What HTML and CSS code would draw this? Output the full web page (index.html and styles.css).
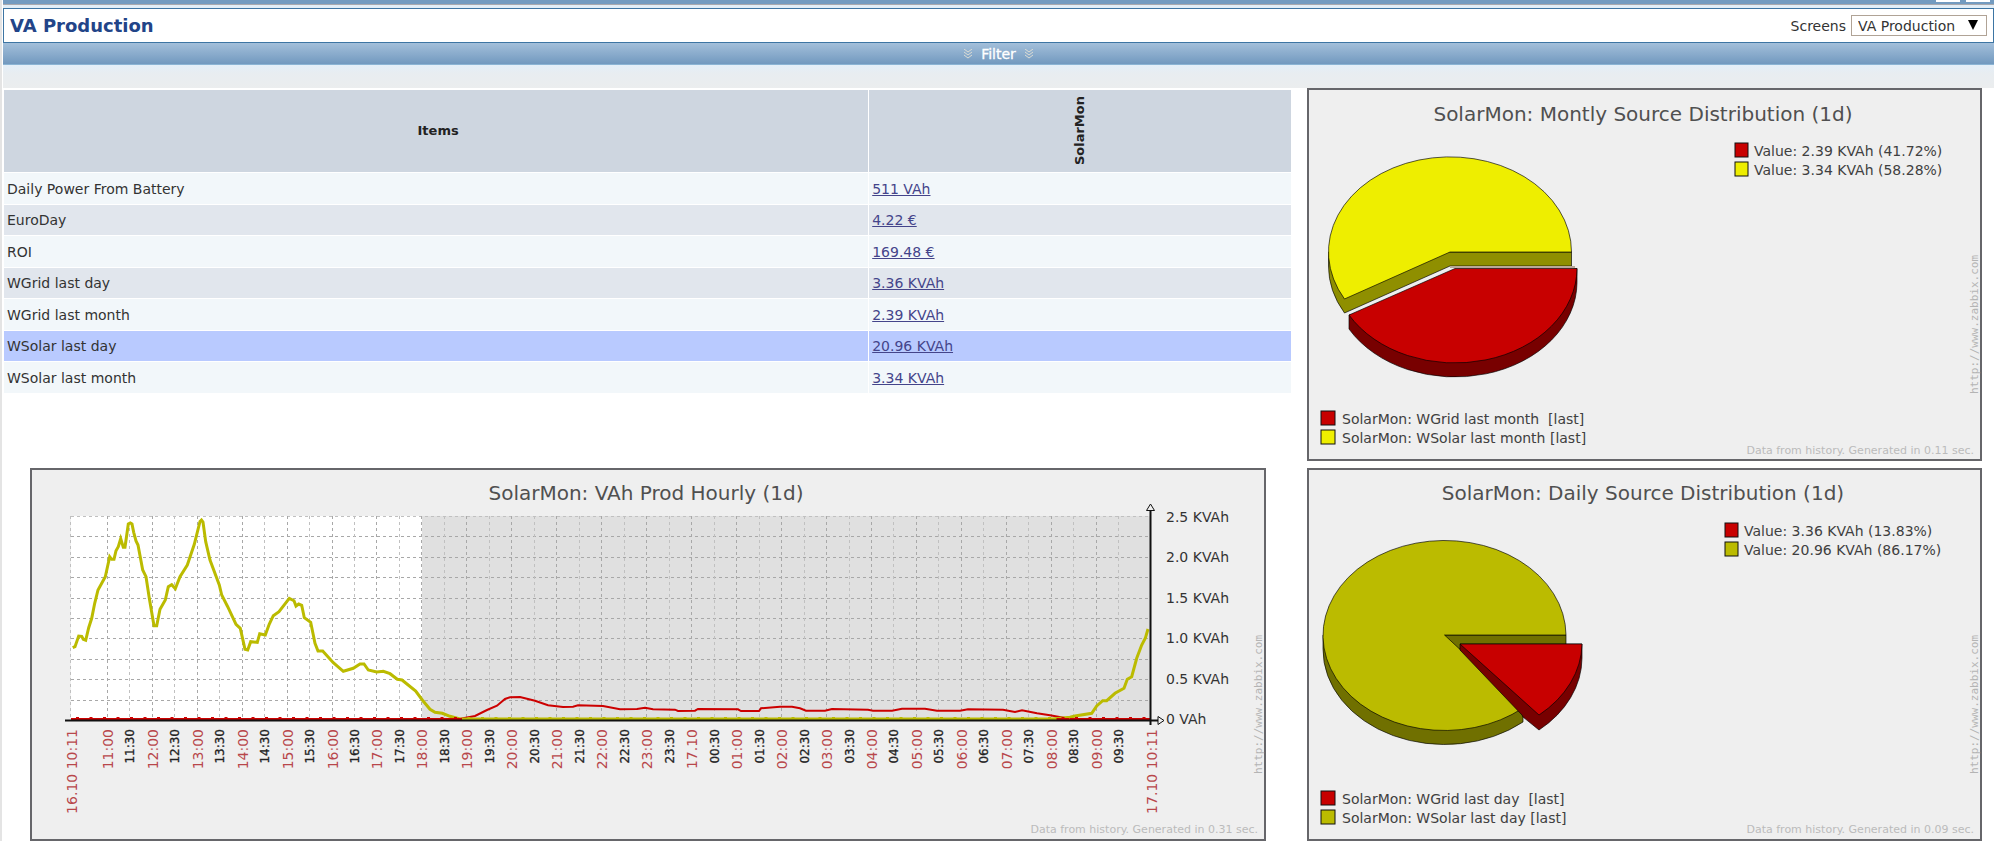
FILE: index.html
```html
<!DOCTYPE html>
<html lang="en">
<head>
<meta charset="utf-8">
<title>VA Production</title>
<link rel="stylesheet" href="styles.css">
</head>
<body>
<div class="page">
  <div class="topstrip"><span class="stub"></span><span class="stub"></span></div>
  <header class="titlebar">
    <h1>VA Production</h1>
    <div class="screens">
      <label for="screen">Screens</label>
      <span class="picker">
        <select id="screen"><option>VA Production</option></select>
        <svg class="arrow" width="10" height="10" viewBox="0 0 10 10" aria-hidden="true"><path d="M0 0H10L5 10Z"/></svg>
      </span>
    </div>
  </header>
  <button class="filter" type="button">
    <svg class="chev" width="8" height="10" viewBox="0 0 8 10" aria-hidden="true"><path d="M0 0L4 3L8 0M0 3L4 6L8 3M0 6L4 9L8 6"/></svg>
    Filter
    <svg class="chev" width="8" height="10" viewBox="0 0 8 10" aria-hidden="true"><path d="M0 0L4 3L8 0M0 3L4 6L8 3M0 6L4 9L8 6"/></svg>
  </button>
  <div class="spacer"></div>
  <main class="grid">
    <div class="items-cell">
      <table class="items">
        <thead><tr><th class="name">Items</th><th><span class="vertical">SolarMon</span></th></tr></thead>
        <tbody>
          <tr><td>Daily Power From Battery</td><td><a href="#">511 VAh</a></td></tr>
          <tr><td>EuroDay</td><td><a href="#">4.22 €</a></td></tr>
          <tr><td>ROI</td><td><a href="#">169.48 €</a></td></tr>
          <tr><td>WGrid last day</td><td><a href="#">3.36 KVAh</a></td></tr>
          <tr><td>WGrid last month</td><td><a href="#">2.39 KVAh</a></td></tr>
          <tr class="selected"><td>WSolar last day</td><td><a href="#">20.96 KVAh</a></td></tr>
          <tr><td>WSolar last month</td><td><a href="#">3.34 KVAh</a></td></tr>
        </tbody>
      </table>
    </div>

    <svg class="chart" viewBox="0 0 675 373" role="img" aria-label="Monthly source distribution">
      <rect class="frame" x="1" y="1" width="673" height="371"/>
      <text class="title" x="336" y="33">SolarMon: Montly Source Distribution (1d)</text>
      <rect class="swatch red" x="428" y="55" width="13" height="14"/>
      <text class="legend" x="447" y="68">Value: 2.39 KVAh (41.72%)</text>
      <rect class="swatch yellow" x="428" y="74" width="13" height="14"/>
      <text class="legend" x="447" y="87">Value: 3.34 KVAh (58.28%)</text>
      <path class="slice yellow-side" d="M21.5 164V178A121.5 95 0 0 0 37.5 225L143 178H264.5V164Z"/>
      <path class="slice yellow" d="M143 164H264.5A121.5 95 0 1 0 37.5 211Z"/>
      <path class="glow" d="M143 179H268"/>
      <path class="slice red-side" d="M42 227V241A122 95 0 0 0 270 194.5V180.5Z"/>
      <path class="slice red" d="M148 180.5H270A122 95 0 0 1 42 227Z"/>
      <rect class="swatch red" x="14" y="323" width="14" height="14"/>
      <text class="legend" x="35" y="336">SolarMon: WGrid last month  [last]</text>
      <rect class="swatch yellow" x="14" y="342" width="14" height="14"/>
      <text class="legend" x="35" y="355">SolarMon: WSolar last month [last]</text>
      <text class="note" x="667" y="366">Data from history. Generated in 0.11 sec.</text>
      <text class="url" transform="translate(671 306) rotate(-90)">http://www.zabbix.com</text>
    </svg>

    <div class="hourly-cell">
      <svg class="chart" id="hourly" viewBox="0 0 1236 373" role="img" aria-label="VAh Prod Hourly">
        <rect class="frame" x="1" y="1" width="1234" height="371"/>
        <text class="title" x="616" y="32">SolarMon: VAh Prod Hourly (1d)</text>
        <rect class="day" x="41" y="48" width="351" height="204"/>
        <rect class="night" x="392" y="48" width="728" height="204"/>
        <g id="gridlines"></g>
        <polyline class="line-red" points="41,251 430,251 433,250.3 445,248 457,242 467,237.7 475,231 480,229.3 490,229 505,232.7 518,237.3 533,239 543,238.7 548,237.3 573,238 590,241.3 607,241 615,239.7 623,241.3 645,241.7 648,243 665,242.7 668,241 708,241.3 711,243 729,243 731,240.3 750,238.7 762,238.7 770,240.3 776,242.7 795,242.7 802,241 838,241.7 843,242.7 862,242.7 872,240.7 895,240.7 907,242.7 930,242.7 938,241.3 973,241.7 985,244 992,242.3 1007,245.3 1020,247.3 1035,250 1040,251 1119,251"/>
        <polyline class="line-olive" points="42.7,179.7 45,178.7 48.7,168 51.7,168.3 53.3,171.3 55.7,172.3 58.7,159.7 61.7,150.3 64.7,135.3 68,122 75.3,108.7 79.7,88.7 81.7,91.3 84,91.3 86,82.7 88.3,78.7 90.7,70.7 93.3,79.3 95,79.3 98.3,56 100.3,55 102,56 103.7,64.3 106,73 108,77 112.7,102 116,108.7 119.3,130.3 124,157.7 126.7,157.7 130,141.3 135.3,132 138.3,118.7 141.7,116.7 145.3,120.7 150,108.7 157.3,97 164.3,76.3 170,53.5 171.5,52 173,54 175.7,73.7 180,92 189.3,117 191.7,127 197.7,138.7 206,156.3 210.3,160.3 215,181.3 217.7,182 220.7,173.7 227.3,174.3 229.7,165.7 235.3,167 239.3,156 243.3,147.7 249,143.7 259.3,130.3 264,132.7 266,138 268.7,136 271.7,137.3 274.3,149.7 280.7,154.3 285,175.3 288,183 292.7,183 303.3,194.7 313.3,203.3 323.3,200.3 330,196 334,196 338.3,202 346.7,204 353.3,203.3 360,205.7 367.3,211.3 372,212 385.7,223 392.3,232 400,241.3 405,244.3 412.3,245.3 420,248.3 430,251 1023,251 1040,249.3 1045,248 1061.7,245.3 1066.7,238 1072.7,232.7 1076.7,232.7 1085,225.3 1094,220.3 1097.3,211.3 1101.7,208.7 1106.7,190.3 1111.7,177 1115.3,170.3 1118,161"/>
        <g id="marks"></g>
        <path class="axis" d="M35 252.5H1128M1120.5 42V257"/>
        <path class="axis-tip" d="M1116.5 42.5L1120.5 36L1124.5 42.5ZM1128 248.5L1134 252.5L1128 256.5Z"/>
        <g id="labels"></g>
        <text class="note" x="1228" y="365">Data from history. Generated in 0.31 sec.</text>
        <text class="url" transform="translate(1232 306) rotate(-90)">http://www.zabbix.com</text>
      </svg>
    </div>

    <svg class="chart" viewBox="0 0 675 373" role="img" aria-label="Daily source distribution">
      <rect class="frame" x="1" y="1" width="673" height="371"/>
      <text class="title" x="336" y="32">SolarMon: Daily Source Distribution (1d)</text>
      <rect class="swatch red" x="418" y="55" width="13" height="14"/>
      <text class="legend" x="437" y="68">Value: 3.36 KVAh (13.83%)</text>
      <rect class="swatch olive" x="418" y="74" width="13" height="14"/>
      <text class="legend" x="437" y="87">Value: 20.96 KVAh (86.17%)</text>
      <path class="slice olive-side" d="M16 167V181A121.5 95 0 0 0 216 254V240L150 181H259V167Z"/>
      <path class="slice olive" d="M137.5 167H259A121.5 95 0 1 0 216 240Z"/>
      <path class="slice red-side" d="M153 176V182L215 247L216 249L232 262A122 95 0 0 0 275 190V176Z"/>
      <path class="slice red" d="M153 176H275A122 95 0 0 1 232 247Z"/>
      <rect class="swatch red" x="14" y="323" width="14" height="14"/>
      <text class="legend" x="35" y="336">SolarMon: WGrid last day  [last]</text>
      <rect class="swatch olive" x="14" y="342" width="14" height="14"/>
      <text class="legend" x="35" y="355">SolarMon: WSolar last day [last]</text>
      <text class="note" x="667" y="365">Data from history. Generated in 0.09 sec.</text>
      <text class="url" transform="translate(671 306) rotate(-90)">http://www.zabbix.com</text>
    </svg>
  </main>
</div>
<script src="chart.js"></script>
</body>
</html>
```
FILE: styles.css
```css
* { box-sizing: border-box; }
body {
  margin: 0;
  background: #fff;
  color: #333;
  font: 14px/18px "DejaVu Sans", Verdana, sans-serif;
}
.page {
  border-left: 2px solid #e4e4e4;
  padding-left: 1px;
}
.topstrip {
  display: flex;
  justify-content: flex-end;
  gap: 6px;
  height: 8px;
  padding-right: 4px;
  background: linear-gradient(#739bc0 4px, #a9a9ae 4px, #a9a9ae 5px, #e2eef7 5px);
}
.stub { width: 24px; height: 2px; background: #fff; }
.titlebar {
  display: flex;
  align-items: center;
  justify-content: space-between;
  height: 35px;
  padding: 0 6px;
  border: 1px solid #3d75a3;
}
.titlebar h1 {
  margin: 0;
  color: #224488;
  font-size: 18px;
  line-height: 20px;
}
.screens { display: flex; align-items: center; gap: 5px; }
.picker { position: relative; display: flex; width: 136px; }
.picker select {
  appearance: none;
  width: 100%;
  height: 21px;
  padding: 0 6px;
  border: 1px solid #b0a396;
  border-radius: 0;
  background: #fff;
  color: #333;
  font: inherit;
}
.arrow { position: absolute; top: 5px; right: 9px; pointer-events: none; }
.filter {
  display: flex;
  align-items: center;
  justify-content: center;
  gap: 9px;
  width: 100%;
  height: 22px;
  padding: 0;
  border: 0;
  border-bottom: 1px solid #8bb4d4;
  background: linear-gradient(#a3bfda, #7299bf);
  color: #fff;
  font: 14px/18px "DejaVu Sans", Verdana, sans-serif;
  -webkit-text-stroke: 0.3px #fff;
}
.chev { fill: none; stroke: #dcdcd4; stroke-width: 1; }
.spacer { height: 23px; background: linear-gradient(#e4eff9, #e8edf1 8px, #ebedee); }
.grid {
  display: grid;
  grid-template-columns: minmax(0, 1304fr) minmax(0, 675fr);
  row-gap: 7px;
  padding-right: 12px;
}
.items-cell { padding: 1px 15px 0 0; }
.items { width: 100%; border-spacing: 1px; table-layout: fixed; }
.items th { height: 82px; padding: 0; background: #ced6e0; color: #222; font-size: 13px; }
.items .name { width: 67.2%; padding-left: 4px; }
.vertical {
  display: inline-block;
  writing-mode: vertical-rl;
  transform: rotate(180deg);
  vertical-align: middle;
}
.items td { height: 31px; padding: 0 3px; background: #f2f7fa; }
.items tbody tr:nth-child(even) td { height: 30px; background: #e1e6ed; }
.items tbody .selected:nth-child(even) td { background: #b9caff; }
.items a { color: #44448a; }
.hourly-cell { padding: 0 41px 0 27px; }

.chart { display: block; width: 100%; height: auto; }
.chart text { font-family: "DejaVu Sans", sans-serif; white-space: pre; }
.frame { fill: #efefef; stroke: #66666a; stroke-width: 2; }
.chart .title { font-size: 20px; fill: #505050; text-anchor: middle; }
.chart .legend { font-size: 14px; fill: #404040; }
.chart .note { font-size: 11px; fill: #bbb; text-anchor: end; }
.chart .url { font-family: "DejaVu Sans Mono", monospace; font-size: 11px; fill: #b4b4b4; }
.swatch { stroke: #111; stroke-width: 1; }
.slice { stroke: #000; stroke-opacity: 0.65; stroke-width: 1; }
.red { fill: #c80000; }
.red-side { fill: #780000; }
.yellow { fill: #eeee00; }
.yellow-side { fill: #8f8f00; }
.olive { fill: #bbbb00; }
.olive-side { fill: #707000; }
.glow { stroke: #b8a898; stroke-width: 2; }
.day { fill: #fff; }
.night { fill: #e0e0e0; }
.major, .minor { stroke: #a8a8a8; stroke-dasharray: 3 3; }
.minor { stroke: #c0c0c0; }
.line-red, .line-olive { fill: none; stroke: #cc0000; stroke-width: 2; }
.line-olive { stroke: #bbbb00; }
.line-olive { stroke-width: 3; }
.mark-red { fill: #cc0000; }
.mark-olive { fill: #bbbb00; }
.axis { stroke: #111; stroke-width: 2; }
.axis-tip { fill: #efefef; stroke: #111; stroke-width: 1; }
.chart .hour { font-size: 14px; fill: #b8474b; text-anchor: end; }
.chart .half { font-size: 12px; fill: #222; stroke: #222; stroke-width: 0.3; text-anchor: end; }
.chart .value { font-size: 14px; fill: #333; }
```
FILE: chart.js
```javascript
(function () {
  var NS = "http://www.w3.org/2000/svg";
  var left = 41, right = 1120, top = 48, bottom = 252;
  var perMinute = (right - left) / 1440;
  var start = 10 * 60 + 11;

  function add(parent, name, attrs, text) {
    var el = document.createElementNS(NS, name);
    Object.keys(attrs).forEach(function (k) { el.setAttribute(k, attrs[k]); });
    if (text) { el.textContent = text; }
    document.getElementById(parent).appendChild(el);
  }
  function pad(n) { return (n < 10 ? "0" : "") + n; }
  function line(cls, x1, y1, x2, y2) {
    add("gridlines", "line", { "class": cls, x1: x1, y1: y1, x2: x2, y2: y2 });
  }
  function tick(cls, x, text) {
    add("labels", "text", { "class": cls, transform: "translate(" + x + " 261) rotate(-90)" }, text);
  }

  for (var i = 0; i <= 9; i++) {
    var y = Math.round(top + i * (bottom - top) / 10) + 0.5;
    line(i === 0 ? "minor" : "major", left, y, right, y);
  }
  line("minor", left - 0.5, top, left - 0.5, bottom);

  tick("hour", 47, "16.10 10:11");
  for (var t = 11 * 60; t < start + 1440 - 30; t += 30) {
    var x = Math.round(left + (t - start) * perMinute);
    var full = t % 60 === 0;
    var label = t === 1440 ? "17.10" : pad(Math.floor(t / 60) % 24) + ":" + pad(t % 60);
    line(full ? "major" : "minor", x - 0.5, top, x - 0.5, bottom);
    tick(full ? "hour" : "half", x + (full ? 5 : 4), label);
  }
  tick("hour", 1127, "17.10 10:11");

  ["2.5 KVAh", "2.0 KVAh", "1.5 KVAh", "1.0 KVAh", "0.5 KVAh", "0 VAh"].forEach(function (v, n) {
    add("labels", "text", { "class": "value", x: 1136, y: Math.round(54 + n * 40.4) }, v);
  });

  for (var m = 47; m < 1118; m += 13.5) {
    var night = m > 430 && m < 1030;
    add("marks", "rect", { "class": night ? "mark-olive" : "mark-red", x: m - 1, y: 249, width: 3, height: 3 });
    if (!night) {
      add("marks", "rect", { "class": "mark-red", x: m - 6, y: 250, width: 13, height: 2 });
    }
  }
})();
```
